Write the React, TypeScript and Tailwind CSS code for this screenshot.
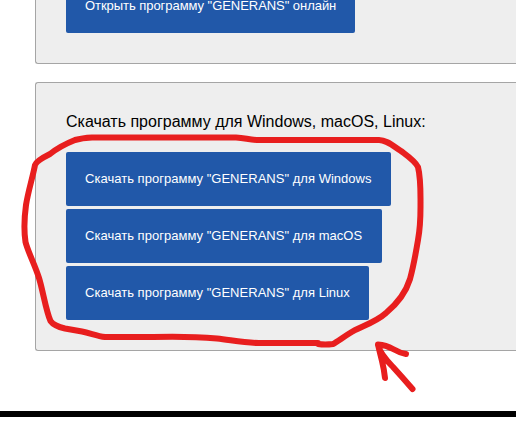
import type { ReactNode } from "react";

function Card({ children, className }: { children: ReactNode; className: string }) {
  return (
    <section className={`ml-[35px] shrink-0 border border-r-0 border-[#a5a5a5] bg-[#eee] pl-[30px] ${className}`}>
      {children}
    </section>
  );
}

function DownloadButton({ children, className }: { children: ReactNode; className: string }) {
  return (
    <button
      className={`block h-[54px] rounded-[2px] bg-[#2158a9] pl-[19px] text-left text-[13px] leading-[54px] whitespace-nowrap text-white ${className}`}
    >
      {children}
    </button>
  );
}

export default function App() {
  return (
    <main className="relative flex h-[433px] w-[516px] flex-col overflow-hidden bg-white font-['Liberation_Sans',Arial,sans-serif] text-black">
      <Card className="flex h-16 flex-col justify-end rounded-bl-[3px] border-t-0 pb-[30px]">
        <DownloadButton className="w-[289px] shrink-0 tracking-[-0.05px]">Открыть программу "GENERANS" онлайн</DownloadButton>
      </Card>
      <Card className="mt-[18px] h-[269px] rounded-l-[3px] pt-[30px]">
        <h2 className="text-base leading-[18px]">Скачать программу для Windows, macOS, Linux:</h2>
        <div className="mt-[21px] flex flex-col gap-[3px]">
          <DownloadButton className="w-[325px] tracking-[0.025px]">Скачать программу "GENERANS" для Windows</DownloadButton>
          <DownloadButton className="w-[316px] tracking-[0.025px]">Скачать программу "GENERANS" для macOS</DownloadButton>
          <DownloadButton className="w-[303px] tracking-[0.025px]">Скачать программу "GENERANS" для Linux</DownloadButton>
        </div>
      </Card>
      <div className="mt-[60px] h-1.5 shrink-0 bg-black" />
      <svg
        className="pointer-events-none absolute inset-0"
        width="516"
        height="433"
        fill="none"
        stroke="#e81e1e"
        strokeWidth="6"
        strokeLinecap="round"
        strokeLinejoin="round"
      >
        <path d="M318 343H259C243 343 231 340 217 338.500C200 337 173 336.500 153 337H105C97 336 90 333 82 331.500L65 328.500Q54 326 50.500 321C46 311 43 291 39 278C35 265 28 252 25.500 242C24 232 24.500 216 26 205C28 192 33 176 35 165Q36 161 50 154Q60 146 75 140Q82 138 92 137.500H236C246 138 249 140 259 140H379C387 140 393 146 401 151C409 157 415 161 418 167C421 179 420.500 193 420.500 207C420.500 220 420 229 418 240C416 252 413 268 410 279C406 292 398 303 386 313C375 323 359 327 350 333C342 338 337 342 333 344Q325 345 318 344" />
        <path d="M406 354Q400 353 393 349T378 344.500Q380 353 382 361T385 378M378 345Q380 354 393 367Q403 378 412.500 389" />
      </svg>
    </main>
  );
}
